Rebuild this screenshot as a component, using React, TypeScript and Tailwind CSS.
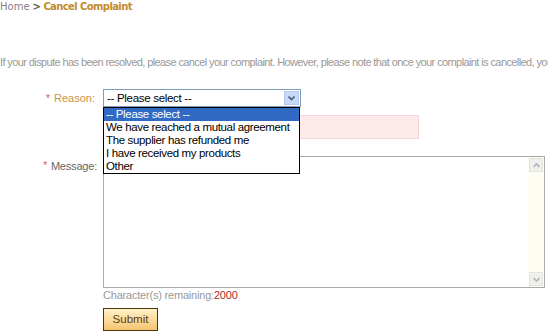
import React from "react";

export default function App() {
  const items = [
    "-- Please select --",
    "We have reached a mutual agreement",
    "The supplier has refunded me",
    "I have received my products",
    "Other",
  ];
  return (
    <div className="w-[548px] h-[336px] overflow-hidden bg-white relative" style={{ fontFamily: '"Liberation Sans", Arial, sans-serif' }}>
      <div className="pt-[1px] h-[14px] text-[10px] leading-[12px] whitespace-nowrap" style={{ fontFamily: '"DejaVu Sans", Verdana, sans-serif' }}>
        <span className="text-[#8a7d86]">Home</span>
        <span className="text-[#6a5a4a] font-bold tracking-[-0.5px]"> &gt; </span>
        <span className="text-[#c38b2c] font-bold tracking-[-0.6px]">Cancel Complaint</span>
      </div>
      <div className="mt-[42px] h-[12px] text-[11px] leading-[12px] text-[#999] whitespace-nowrap overflow-hidden tracking-[-0.6px]">
        If your dispute has been resolved, please cancel your complaint. However, please note that once your complaint is cancelled, you
      </div>
      <div className="mt-[21px] flex flex-col">
        <div className="flex items-start h-[18px]">
          <div className="w-[103px] pr-[8px] flex justify-end items-center h-[18px] text-[11px] text-[#c8934a]">
            <span className="text-[#e05050] mr-[4px] text-[10px]">*</span>Reason:
          </div>
          <div className="relative">
            <div className="w-[198px] h-[18px] border border-[#7f9db9] bg-white flex items-center">
              <span className="text-[11.5px] tracking-[-0.3px] text-black pl-[3px] flex-1 leading-[14px]">-- Please select --</span>
              <div className="w-[15px] h-[14px] mr-[1px] bg-[#c8d8f8] border border-[#b8c8ec] flex items-center justify-center">
                <svg width="7" height="5" viewBox="0 0 7 5"><path d="M0.5 0.5 L3.5 3.5 L6.5 0.5" stroke="#4d6185" strokeWidth="1.6" fill="none" /></svg>
              </div>
            </div>
            <div className="absolute left-0 top-[18px] w-[197px] border border-black bg-white z-10 text-[11.5px] tracking-[-0.35px] leading-[13px]">
              {items.map((t, i) => (
                <div key={t} className={"h-[13px] pl-[2px] whitespace-nowrap " + (i === 0 ? "bg-[#316ac5] text-white" : "text-black")}>
                  {t}
                </div>
              ))}
            </div>
          </div>
        </div>
        <div className="flex mt-[8px]">
          <div className="w-[103px]" />
          <div className="w-[316px] h-[24px] bg-[#ffeaea] border border-[#f4d6d6]" />
        </div>
        <div className="flex mt-[17px] items-start">
          <div className="w-[103px] pr-[6px] flex justify-end pt-[2px] text-[11px] text-[#666] tracking-[-0.2px]">
            <span className="text-[#e05050] mr-[4px] text-[10px]">*</span>Message:
          </div>
          <div className="w-[442px] h-[132px] border border-[#a9a9a9] bg-white flex justify-end">
            <div className="w-[16px] h-full bg-[#fdfdf4] flex flex-col justify-between items-center py-[1px]">
              <div className="w-[14px] h-[14px] bg-[#eef0ea] border border-[#e2e4de] flex items-center justify-center">
                <svg width="7" height="5" viewBox="0 0 7 5"><path d="M0.5 4 L3.5 1 L6.5 4" stroke="#aab" strokeWidth="1.3" fill="none" /></svg>
              </div>
              <div className="w-[14px] h-[14px] bg-[#eef0ea] border border-[#e2e4de] flex items-center justify-center">
                <svg width="7" height="5" viewBox="0 0 7 5"><path d="M0.5 1 L3.5 4 L6.5 1" stroke="#aab" strokeWidth="1.3" fill="none" /></svg>
              </div>
            </div>
          </div>
        </div>
        <div className="flex mt-[1px]">
          <div className="w-[103px]" />
          <div className="text-[11px] leading-[13px] text-[#999] tracking-[-0.2px]">
            Character(s) remaining:<span className="text-[#a52a2a]">2000</span>
          </div>
        </div>
        <div className="flex mt-[6px]">
          <div className="w-[103px]" />
          <button className="w-[55px] h-[23px] border border-[#4e3510] bg-gradient-to-b from-[#fff2c8] to-[#f6c470] text-[11.5px] text-[#5a3d12]">
            Submit
          </button>
        </div>
      </div>
    </div>
  );
}
